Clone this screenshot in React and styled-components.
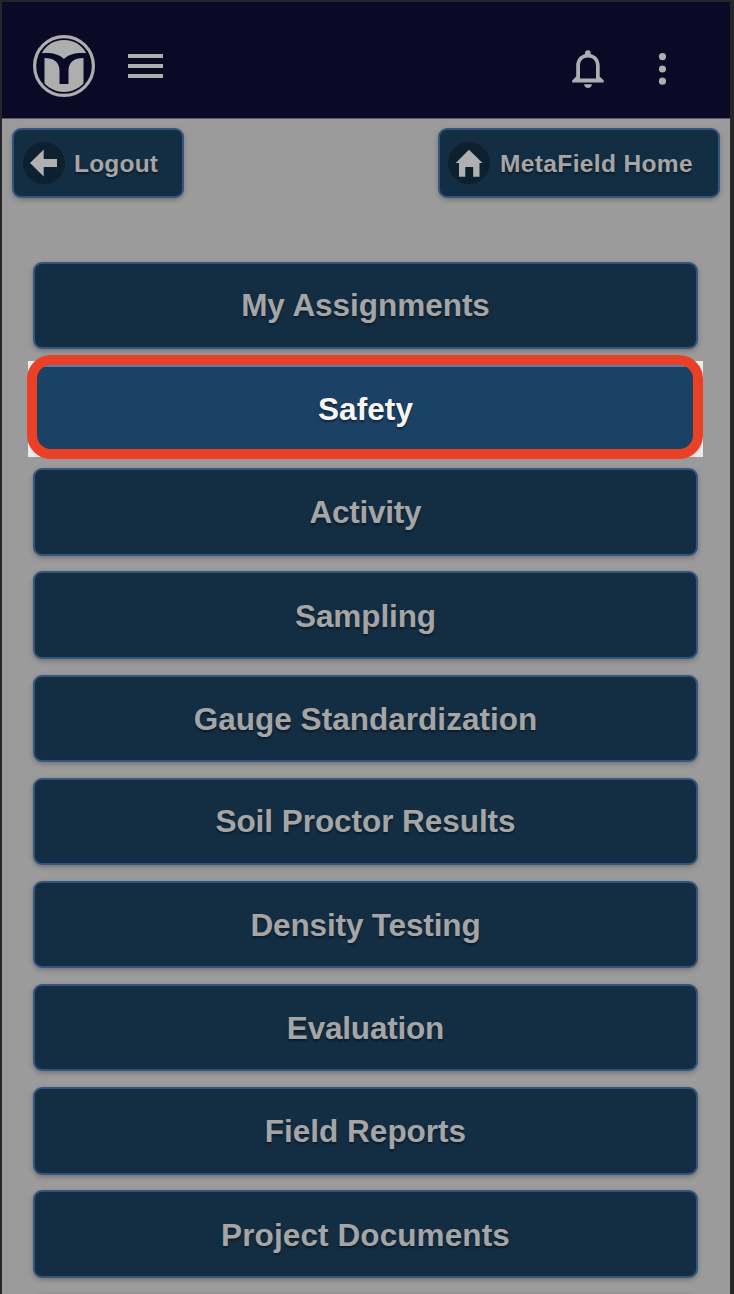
import React from "react"
import styled, {createGlobalStyle} from "styled-components"

const GlobalStyle = createGlobalStyle`
  * {
    box-sizing: border-box;
  }

  body {
    margin: 0;
    background: #262626;
    overflow: hidden;
  }
`

const Screen = styled.div`
  height: 1294px;
  width: 734px;
  padding: 2px 4px 0 2px;
  background: #262626;
  overflow: hidden;
  font-family: "Liberation Sans", Arial, sans-serif;
`

const Page = styled.div`
  height: 1292px;
  background: #9b9b9b;
  overflow: hidden;
`

const Header = styled.header`
  display: flex;
  align-items: center;
  height: 117px;
  padding: 11px 56px 0 30px;
  background: #0b0a26;
  border-bottom: 1px solid #5d5a6c;
`

const IconButton = styled.button`
  display: flex;
  padding: 0;
  margin: ${props => props.$margin || "0"};
  border: none;
  background: none;
`

const Toolbar = styled.nav`
  display: flex;
  justify-content: space-between;
  padding: 9px 10px 0;
`

const BaseButton = styled.button`
  display: flex;
  align-items: center;
  border: 2px solid #34557f;
  border-radius: 9px;
  background: #132d43;
  color: #a5a5a5;
  font-family: inherit;
  font-weight: bold;
  white-space: nowrap;
  text-shadow: 0 2px 2px rgba(0, 0, 0, 0.4);
  box-shadow: 0 2px 5px rgba(0, 0, 0, 0.25);
`

const NavButton = styled(BaseButton)`
  width: ${props => props.$width}px;
  height: 70px;
  padding: 0 0 0 ${props => props.$inset}px;
  font-size: 24.5px;
  letter-spacing: ${props => props.$spacing}px;
`

const NavLabel = styled.span`
  padding-top: 2px;
`

const Disc = styled.span`
  display: flex;
  flex: none;
  width: 42px;
  height: 42px;
  margin-right: ${props => props.$gap}px;
  border-radius: 50%;
  background: #0d2030;
`

const Menu = styled.main`
  display: grid;
  grid-auto-rows: 87.4px;
  row-gap: 15.78px;
  padding: 64px 32px 0 31px;
`

const MenuItem = styled.div`
  position: relative;
  display: grid;
`

const MenuButton = styled(BaseButton)`
  justify-content: center;
  padding: ${props => props.$raised ? "0" : "2px 0 0"};
  font-size: 31.5px;
  letter-spacing: ${props => props.$spacing}px;
  background: ${props => props.$active ? "#1b4164" : "#132d43"};
  border-color: ${props => props.$active ? "#537fb8" : "#34557f"};
  color: ${props => props.$active ? "#f7f5f5" : "#a5a5a5"};
`

const Backdrop = styled.div`
  position: absolute;
  top: -4px;
  right: -5px;
  left: -5px;
  height: 96px;
  background: #ececec;
`

const ActiveButton = styled(MenuButton)`
  position: relative;
`

const Outline = styled.div`
  position: absolute;
  top: -10px;
  right: -5px;
  left: -6px;
  height: 104px;
  border: 10px solid #ea4025;
  border-radius: 24px;
`

const items = [
  {label: "My Assignments", spacing: -0.03, raised: true},
  {label: "Safety", spacing: 0.1, active: true},
  {label: "Activity", spacing: -0.25, raised: true},
  {label: "Sampling", spacing: -0.1},
  {label: "Gauge Standardization", spacing: 0.03},
  {label: "Soil Proctor Results", spacing: -0.05, raised: true},
  {label: "Density Testing", spacing: -0.15},
  {label: "Evaluation", spacing: -0.2},
  {label: "Field Reports", spacing: 0},
  {label: "Project Documents", spacing: 0.1},
  {label: "", spacing: 0}
]

const Logo = () => (
  <svg width="64" height="64" viewBox="32 34 64 64">
    <circle cx="64" cy="66" r="29.4" fill="none" stroke="#aeaeae" strokeWidth="3.2" />
    <path fill="#aeaeae" d="M41.800 53.300C46 45 54 40 64 40S82 45 86.300 53.300C77 52.500 69 54 64 59C59 54 51 52.500 41.800 53.300Z" />
    <path fill="#aeaeae" d="M44.500 58C54 58 59.500 62 59.500 71V84H68.500V71C68.500 62 74 58 83.500 58V83.500C78 89 71.500 92 64 92S50 89 44.500 83.500Z" />
  </svg>
)

const MenuIcon = () => (
  <svg width="35" height="24" viewBox="0 0 35 24" fill="#aeaeae">
    <rect width="35" height="4" />
    <rect y="10" width="35" height="4" />
    <rect y="20" width="35" height="4" />
  </svg>
)

const BellIcon = () => (
  <svg width="32" height="38" viewBox="572 49 32 38" fill="#aeaeae">
    <path fillRule="evenodd" d="M585 53V52.200A2.800 2.800 0 0 1 590.700 52.200V53C596.500 54.500 599.700 59 599.700 65V75.500L603.700 79.500V81.500H572.200V79.500L576.200 75.500V65C576.200 59 579.500 54.500 585 53ZM580 77.500H596V65C596 59.500 593 56.500 588 56.500S580 59.500 580 65Z" />
    <path d="M584 83.200H592C591.500 85.700 590 87 588 87S584.500 85.700 584 83.200Z" />
  </svg>
)

const MoreIcon = () => (
  <svg width="8" height="34" viewBox="0 0 8 34" fill="#aeaeae">
    <circle cx="4.500" cy="4.600" r="3.600" />
    <circle cx="4.500" cy="17" r="3.600" />
    <circle cx="4.500" cy="29.200" r="3.600" />
  </svg>
)

const BackIcon = () => (
  <svg width="42" height="42" viewBox="0 0 42 42" fill="#b0b0b0">
    <path d="M7 21L20.700 7.500V17H34V25H20.700V34.500Z" />
  </svg>
)

const HomeIcon = () => (
  <svg width="42" height="42" viewBox="0 0 42 42" fill="#b0b0b0">
    <path d="M21 7.700L34.600 21H31.500V34.700H25.200V25H17.300V34.700H11V21H7.700Z" />
  </svg>
)

const App = () => (
  <Screen>
    <GlobalStyle />
    <Page>
      <Header>
        <Logo />
        <IconButton $margin="0 0 0 32px" aria-label="Menu"><MenuIcon /></IconButton>
        <IconButton $margin="6px 0 0 auto" aria-label="Notifications"><BellIcon /></IconButton>
        <IconButton $margin="6px 8px 0 54px" aria-label="More"><MoreIcon /></IconButton>
      </Header>
      <Toolbar>
        <NavButton $width={172} $spacing={0.2} $inset={9}>
          <Disc $gap={9}><BackIcon /></Disc>
          <NavLabel>Logout</NavLabel>
        </NavButton>
        <NavButton $width={282.4} $spacing={0.35} $inset={8.5}>
          <Disc $gap={10}><HomeIcon /></Disc>
          <NavLabel>MetaField Home</NavLabel>
        </NavButton>
      </Toolbar>
      <Menu>
        {items.map(({label, spacing, active, raised}) => (
          <MenuItem key={label}>
            {active && <Backdrop />}
            {active
              ? <ActiveButton $active $spacing={spacing}>{label}</ActiveButton>
              : <MenuButton $spacing={spacing} $raised={raised}>{label}</MenuButton>}
            {active && <Outline />}
          </MenuItem>
        ))}
      </Menu>
    </Page>
  </Screen>
)

export default App
